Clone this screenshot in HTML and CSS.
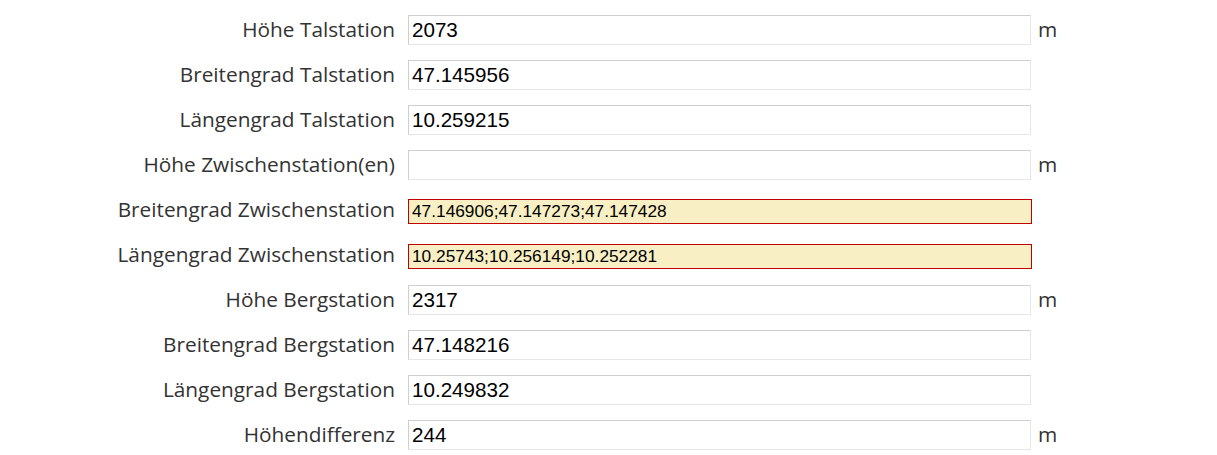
FILE: index.html
```html
<!DOCTYPE html>
<html lang="de">
<head>
    <meta charset="UTF-8">
    <meta name="viewport" content="width=device-width, initial-scale=1.0">
    <title>Stationen</title>
    <link rel="stylesheet" href="styles.css">
</head>
<body>
    <form class="station-form">
        <label class="sf-label">Höhe Talstation</label>
        <input class="sf-input" type="text" value="2073">
        <span class="sf-unit">m</span>

        <label class="sf-label">Breitengrad Talstation</label>
        <input class="sf-input" type="text" value="47.145956">
        <span class="sf-unit"></span>

        <label class="sf-label">Längengrad Talstation</label>
        <input class="sf-input" type="text" value="10.259215">
        <span class="sf-unit"></span>

        <label class="sf-label">Höhe Zwischenstation(en)</label>
        <input class="sf-input" type="text" value="">
        <span class="sf-unit">m</span>

        <!-- fehlerhafte Felder -->
        <label class="sf-label">Breitengrad Zwischenstation</label>
        <input class="sf-input sf-error" type="text" value="47.146906;47.147273;47.147428">
        <span class="sf-unit"></span>

        <label class="sf-label">Längengrad Zwischenstation</label>
        <input class="sf-input sf-error" type="text" value="10.25743;10.256149;10.252281">
        <span class="sf-unit"></span>

        <label class="sf-label">Höhe Bergstation</label>
        <input class="sf-input" type="text" value="2317">
        <span class="sf-unit">m</span>

        <label class="sf-label">Breitengrad Bergstation</label>
        <input class="sf-input" type="text" value="47.148216">
        <span class="sf-unit"></span>

        <label class="sf-label">Längengrad Bergstation</label>
        <input class="sf-input" type="text" value="10.249832">
        <span class="sf-unit"></span>

        <label class="sf-label">Höhendifferenz</label>
        <input class="sf-input" type="text" value="244">
        <span class="sf-unit">m</span>
    </form>
</body>
</html>
```

FILE: styles.css
```css
body{
    margin: 0;
    background-color: #fff;
    font-family: "Open Sans", "Liberation Sans", sans-serif;
}
.station-form{
    display: grid;
    grid-template-columns: 395px 623px 40px;
    grid-auto-rows: 30px;
    column-gap: 13px;
    row-gap: 15px;
    padding-top: 15px;
    align-items: center;
}
.sf-label{
    text-align: right;
    font-size: 20.8px;
    color: #333;
    line-height: 28px;
    padding-bottom: 2px;
}
.sf-unit{
    font-size: 20.8px;
    color: #333;
    line-height: 28px;
    padding-bottom: 2px;
    margin-left: -6px;
}
.sf-input{
    box-sizing: border-box;
    width: 623px;
    height: 30px;
    margin: 0;
    padding: 0 3px;
    border: 1px solid #e6e6e6;
    border-top-color: #cfcfcf;
    border-left-color: #cfcfcf;
    font-family: "Liberation Sans", Arial, sans-serif;
    font-size: 20.6px;
    color: #000;
    background-color: #fff;
    outline: none;
}
.sf-error{
    align-self: start;
    margin-top: 4px;
    width: 624px;
    height: 25px;
    border: 1px solid #c00000;
    background-color: #f8efc4;
    font-size: 17.3px;
}
```
